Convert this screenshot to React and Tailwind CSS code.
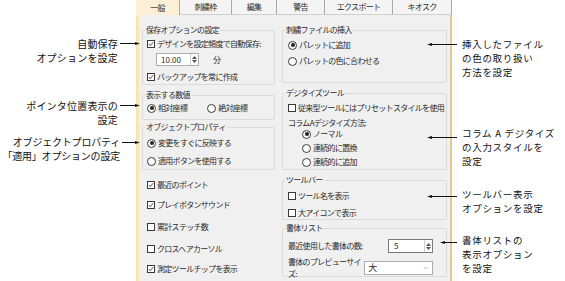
import React from 'react';
import { ChevronDown } from 'lucide-react';

function Box({ on }) {
  return (
    <span className="w-[8px] h-[8px] border border-[#3a3a3a] bg-white flex items-center justify-center shrink-0">
      {on && (
        <svg width="6" height="6" viewBox="0 0 6 6">
          <path d="M0.8 3.1 L2.3 4.6 L5.2 1.2" fill="none" stroke="#333" strokeWidth="0.9" />
        </svg>
      )}
    </span>
  );
}

function Radio({ on }) {
  return (
    <span className="w-[9px] h-[9px] rounded-full border border-[#3a3a3a] bg-white flex items-center justify-center shrink-0">
      {on && <span className="w-[4px] h-[4px] rounded-full bg-[#222]" />}
    </span>
  );
}

function Row({ className = '', children }) {
  return <div className={`h-[12px] flex items-center gap-[2px] ${className}`}>{children}</div>;
}

function Group({ title, className = '', children }) {
  return (
    <div className={`relative border border-[#dadada] rounded-[2px] ${className}`}>
      <span className="absolute left-[2px] top-[-7px] px-[1px] bg-[#f0f0f0] leading-[12px]">{title}</span>
      {children}
    </div>
  );
}

function Spin() {
  return (
    <div className="w-[8px] border-l border-[#cfcfcf] flex flex-col items-center justify-center gap-[1px]">
      <svg width="5" height="3" viewBox="0 0 5 3"><path d="M0 3 L2.5 0 L5 3 Z" fill="#555" /></svg>
      <svg width="5" height="3" viewBox="0 0 5 3"><path d="M0 0 L2.5 3 L5 0 Z" fill="#555" /></svg>
    </div>
  );
}

function Arrow({ className = '', toLeft }) {
  return (
    <div className={`absolute h-[5px] flex items-center ${toLeft ? 'flex-row-reverse' : ''} ${className}`}>
      <div className="flex-1 h-px bg-[#111]" />
      <svg width="5" height="5" viewBox="0 0 5 5" className="shrink-0">
        <path d={toLeft ? 'M0 2.5 L5 0.9 L5 4.1 Z' : 'M5 2.5 L0 0.9 L0 4.1 Z'} fill="#111" />
      </svg>
    </div>
  );
}

const TABS = [
  { label: '一般', w: 'w-[44px]', active: true },
  { label: '刺繍枠', w: 'w-[52px]' },
  { label: '編集', w: 'w-[45px]' },
  { label: '警告', w: 'w-[48px]' },
  { label: 'エクスポート', w: 'w-[68px]' },
  { label: 'キオスク', w: 'w-[59px]' },
];

export default function App() {
  return (
    <div className="relative w-[565px] h-[281px] bg-white flex overflow-hidden font-['Noto_Sans_CJK_JP',sans-serif]">
      {/* left callouts */}
      <div className="relative w-[136px] h-full text-[10px] leading-[14px] tracking-[0.2px] text-[#111] text-right">
        <div className="absolute right-[18px] top-[37px]">
          <div>自動保存</div>
          <div>オプションを設定</div>
        </div>
        <div className="absolute right-[18px] top-[99px]">
          <div>ポインタ位置表示の</div>
          <div>設定</div>
        </div>
        <div className="absolute right-[16px] top-[135px] whitespace-nowrap tracking-[-0.2px]">
          <div>オブジェクトプロパティ</div>
          <div>「適用」オプションの設定</div>
        </div>
      </div>

      {/* dialog */}
      <div className="w-[316px] h-full flex flex-col text-[8px] tracking-[-0.7px] text-[#2a2a2a]">
        <div className="h-[15px] flex shrink-0">
          {TABS.map((t) => (
            <div
              key={t.label}
              className={`${t.w} flex items-center justify-center border-r border-[#a9a9a9] ${t.active ? 'bg-[#fcefd6]' : 'bg-[#f4f4f4] border-b border-b-[#d0d0d0]'}`}
            >
              {t.label}
            </div>
          ))}
        </div>
        <div className="flex-1 bg-[#f0f0f0] border-l-[3px] border-l-[#f7e6b0] border-r-[2px] border-r-[#e6c98c] flex gap-[7px] pl-[3px] pr-[1px] pt-[15px]">
          {/* left column */}
          <div className="w-[133px] flex flex-col">
            <Group title="保存オプションの設定" className="h-[55px] pt-[7px] pl-[4px]">
              <Row><Box on />デザインを設定頻度で自動保存:</Row>
              <div className="mt-[3px] h-[13px] flex items-center pl-[9px]">
                <div className="w-[43px] h-[13px] bg-white border border-[#adadad] flex">
                  <span className="flex-1 pl-[4px] leading-[11px] tracking-normal">10.00</span>
                  <Spin />
                </div>
                <span className="ml-[14px]">分</span>
              </div>
              <Row className="mt-[5px]"><Box on />バックアップを常に作成</Row>
            </Group>

            <Group title="表示する数値" className="mt-[10px] h-[25px] pt-[6px] pl-[4px]">
              <Row>
                <Radio on />相対座標
                <span className="ml-[18px]"><Radio /></span>絶対座標
              </Row>
            </Group>

            <Group title="オブジェクトプロパティ" className="mt-[7px] h-[43px] pt-[9px] pl-[4px]">
              <Row><Radio on />変更をすぐに反映する</Row>
              <Row className="mt-[6px]"><Radio />適用ボタンを使用する</Row>
            </Group>

            <div className="pl-[5px] flex flex-col">
              <Row className="mt-[9px]"><Box on />最近のポイント</Row>
              <Row className="mt-[8px]"><Box on />プレイボタンサウンド</Row>
              <Row className="mt-[10px]"><Box />累計ステッチ数</Row>
              <Row className="mt-[10px]"><Box />クロスヘアカーソル</Row>
              <Row className="mt-[8px]"><Box on />測定ツールチップを表示</Row>
            </div>
          </div>

          {/* right column */}
          <div className="w-[165px] flex flex-col">
            <Group title="刺繍ファイルの挿入" className="h-[53px] pt-[8px] pl-[5px]">
              <Row><Radio on />パレットに追加</Row>
              <Row className="mt-[4px]"><Radio />パレットの色に合わせる</Row>
            </Group>

            <Group title="デジタイズツール" className="mt-[10px] h-[77px] pt-[9px] pl-[5px]">
              <div className="h-[10px] flex items-center gap-[2px]"><Box />従来型ツールにはプリセットスタイルを使用</div>
              <div className="h-[10px] mt-[5px] flex items-center">コラムAデジタイズ方法:</div>
              <div className="pl-[14px] flex flex-col">
                <div className="h-[10px] mt-[1px] flex items-center gap-[2px]"><Radio on />ノーマル</div>
                <div className="h-[10px] mt-[4px] flex items-center gap-[2px]"><Radio />連続的に置換</div>
                <div className="h-[10px] mt-[4px] flex items-center gap-[2px]"><Radio />連続的に追加</div>
              </div>
            </Group>

            <Group title="ツールバー" className="mt-[10px] h-[40px] pt-[10px] pl-[5px]">
              <div className="h-[10px] flex items-center gap-[2px]"><Box />ツール名を表示</div>
              <div className="h-[10px] mt-[7px] flex items-center gap-[2px]"><Box />大アイコンで表示</div>
            </Group>

            <Group title="書体リスト" className="mt-[8px] h-[49px] pt-[10px] pl-[5px] pr-[13px]">
              <div className="h-[14px] flex items-center justify-between">
                <span>最近使用した書体の数:</span>
                <div className="w-[45px] h-[14px] bg-white border border-[#7a7a7a] flex">
                  <span className="flex-1 pl-[5px] leading-[12px] tracking-normal">5</span>
                  <Spin />
                </div>
              </div>
              <div className="h-[14px] mt-[8px] flex items-center justify-between">
                <span>書体のプレビューサイズ:</span>
                <div className="w-[73px] h-[14px] bg-white border border-[#adadad] flex items-center justify-between pl-[3px] pr-[2px]">
                  <span className="text-[9px]">大</span>
                  <ChevronDown className="w-[8px] h-[8px] text-[#888]" strokeWidth={1.5} />
                </div>
              </div>
            </Group>
          </div>
        </div>
      </div>

      {/* right callouts */}
      <div className="relative flex-1 h-full text-[9.5px] leading-[14px] tracking-[0.7px] text-[#111]">
        <div className="absolute left-[10px] top-[37px] whitespace-nowrap">
          <div>挿入したファイル</div>
          <div>の色の取り扱い</div>
          <div>方法を設定</div>
        </div>
        <div className="absolute left-[10px] top-[126px] whitespace-nowrap">
          <div>コラム A デジタイズ</div>
          <div>の入力スタイルを</div>
          <div>設定</div>
        </div>
        <div className="absolute left-[10px] top-[187px] whitespace-nowrap">
          <div>ツールバー表示</div>
          <div>オプションを設定</div>
        </div>
        <div className="absolute left-[10px] top-[233px] whitespace-nowrap">
          <div>書体リストの</div>
          <div>表示オプション</div>
          <div>を設定</div>
        </div>
      </div>

      {/* arrows */}
      <Arrow className="left-[120px] top-[41px] w-[20px]" />
      <Arrow className="left-[120px] top-[103px] w-[20px]" />
      <Arrow className="left-[122px] top-[140px] w-[18px]" />
      <Arrow toLeft className="left-[427px] top-[42px] w-[30px]" />
      <Arrow toLeft className="left-[427px] top-[135px] w-[30px]" />
      <Arrow toLeft className="left-[427px] top-[194px] w-[30px]" />
      <Arrow toLeft className="left-[440px] top-[240px] w-[17px]" />
    </div>
  );
}
